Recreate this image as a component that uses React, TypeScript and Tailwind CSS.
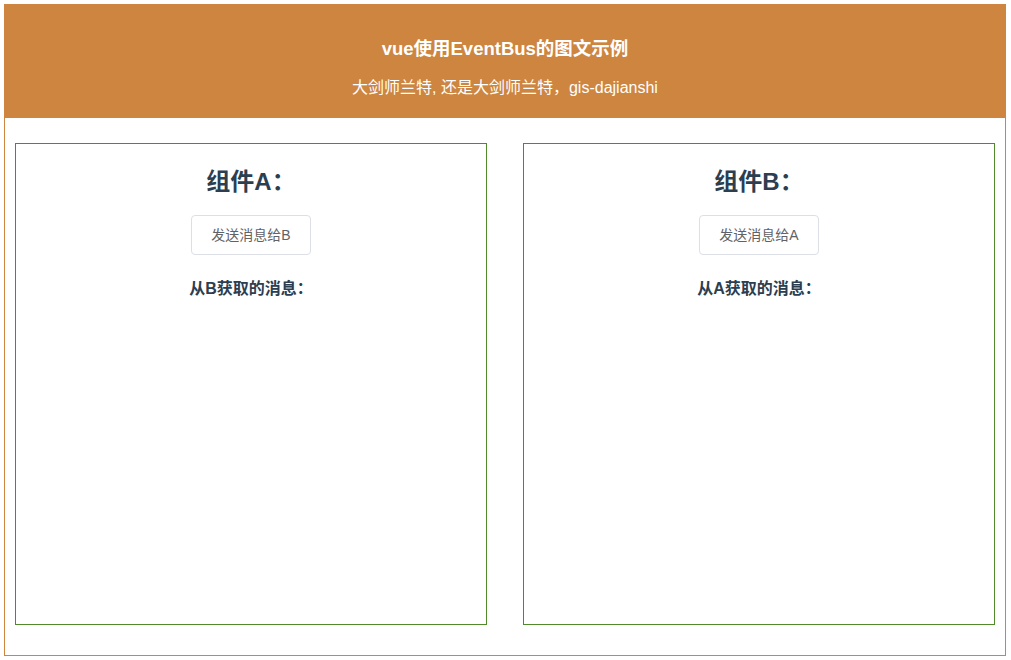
import React from "react";

const font = { fontFamily: '"Liberation Sans", "Noto Sans CJK SC", sans-serif' };

function Panel({ name, target }: { name: string; target: string }) {
  return (
    <div className="w-[472px] h-[482px] border border-[#4f8a2b] flex flex-col items-center">
      <h2 className="mt-[22px] text-[24px] leading-[32px] font-bold text-[#2c3e50]">
        组件{name}：
      </h2>
      <button className="mt-[17px] h-[40px] px-[19px] rounded-[4px] border border-[#dcdfe6] bg-white text-[14px] text-[#606266]">
        发送消息给{target}
      </button>
      <h3 className="mt-[24px] text-[16px] leading-[20px] font-bold text-[#2c3e50]">
        从{target}获取的消息：
      </h3>
    </div>
  );
}

export default function App() {
  return (
    <div className="bg-white w-[1011px] h-[660px] pt-1 pl-1" style={font}>
      <div className="w-[1002px] h-[652px] border border-[#cd853f] flex flex-col">
        <div className="h-[113px] bg-[#cd853f] flex flex-col items-center text-white">
          <h1 className="mt-[32px] text-[18.5px] leading-[24px] font-bold">
            vue使用EventBus的图文示例
          </h1>
          <p className="mt-[16px] text-[16px] leading-[21px]">
            大剑师兰特, 还是大剑师兰特，gis-dajianshi
          </p>
        </div>
        <div className="flex justify-between px-[10px] mt-[25px]">
          <Panel name="A" target="B" />
          <Panel name="B" target="A" />
        </div>
      </div>
    </div>
  );
}
